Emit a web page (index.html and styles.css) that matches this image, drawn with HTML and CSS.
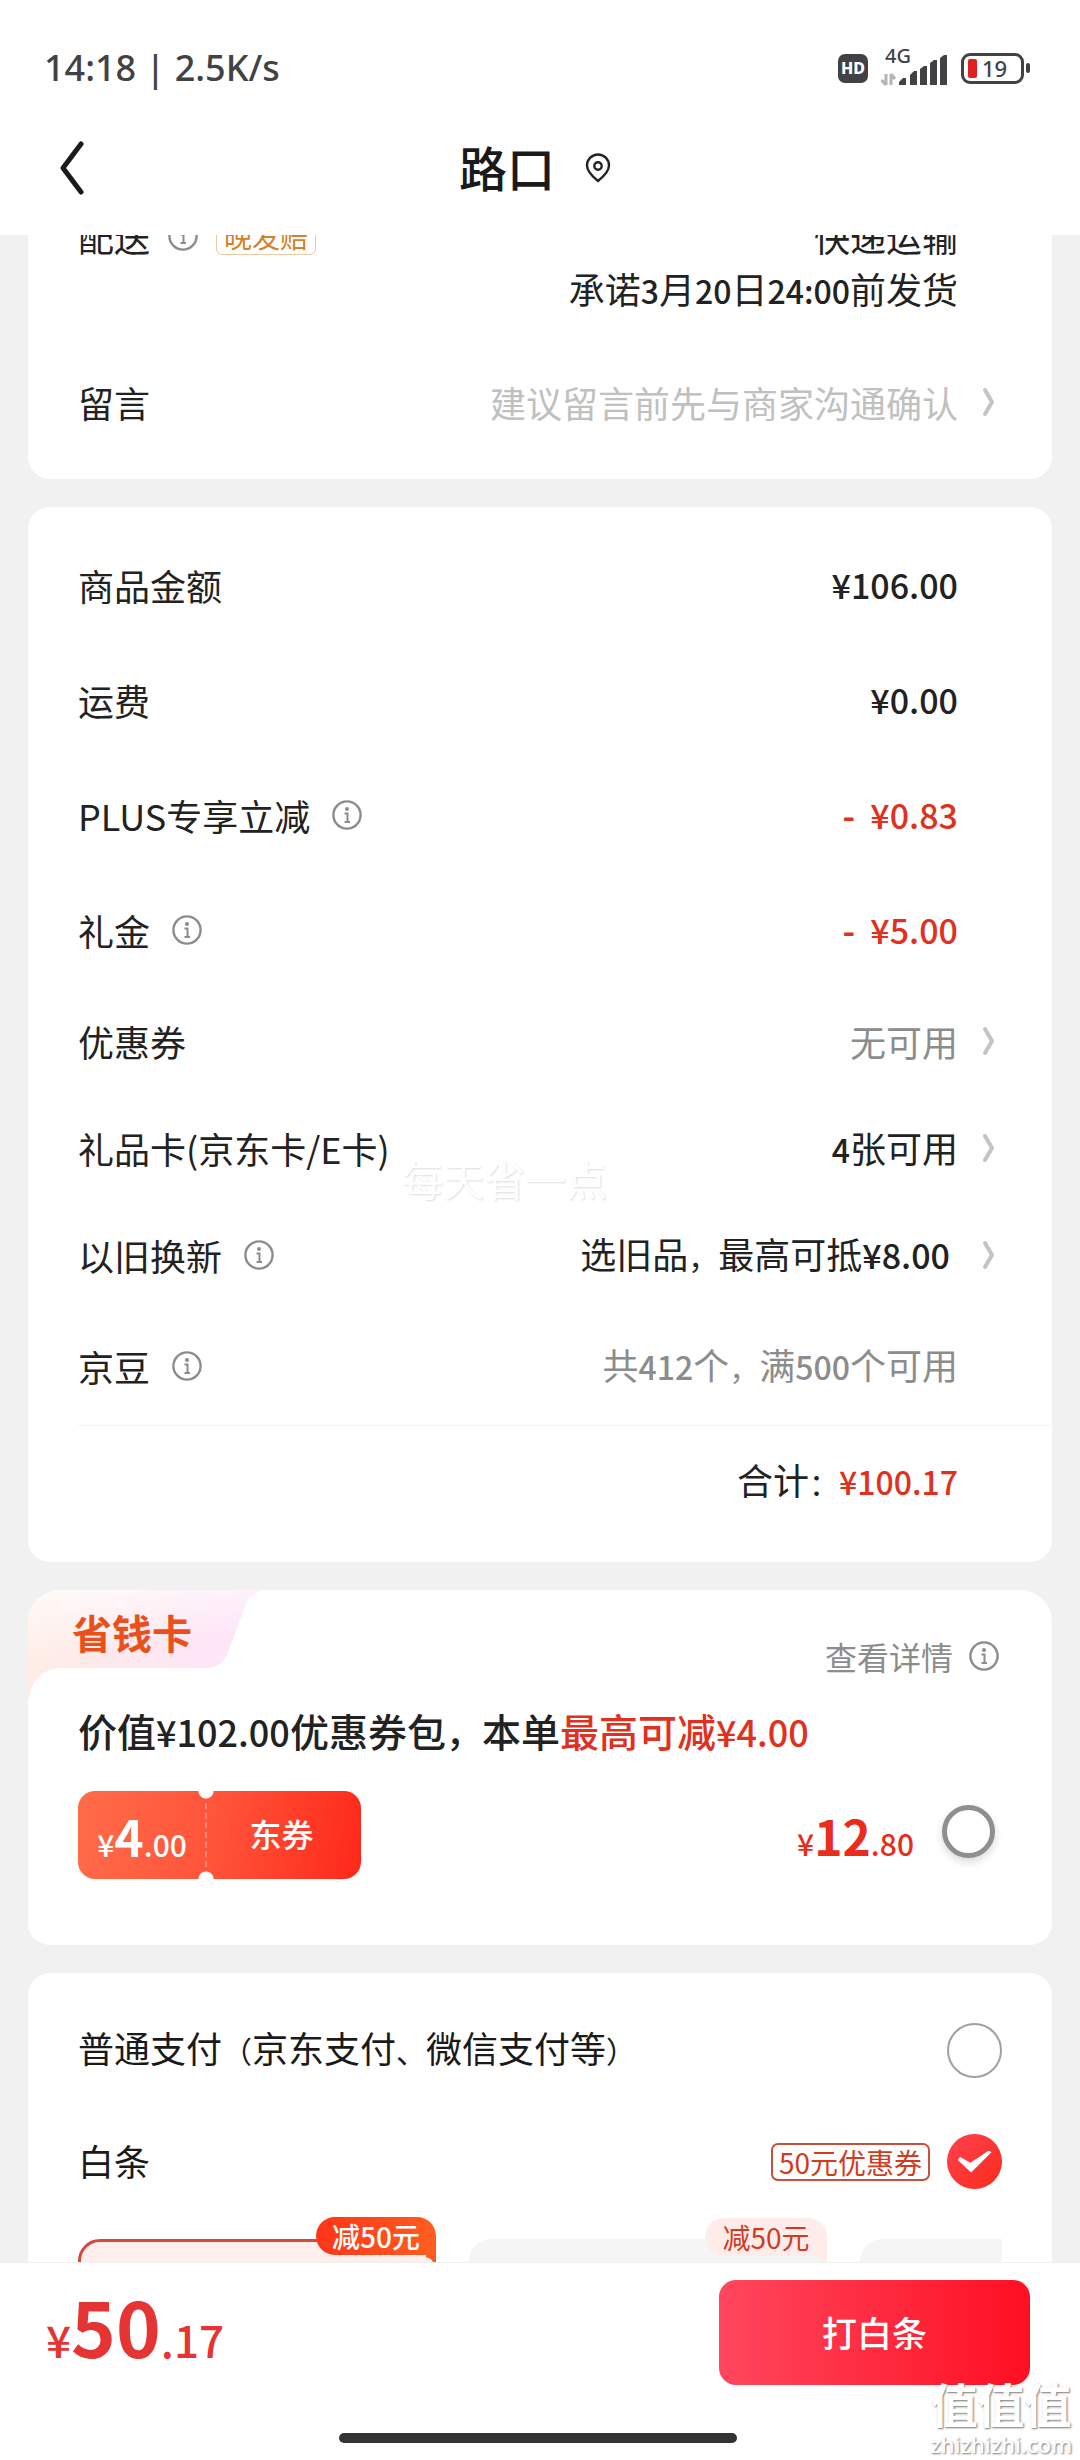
FILE: index.html
```html
<!DOCTYPE html>
<html lang="zh-CN">
<head>
    <meta charset="UTF-8">
    <meta name="viewport" content="width=device-width, initial-scale=1.0">
    <title>填写订单</title>
    <link rel="stylesheet" href="styles.css">
</head>
<body>
    <!-- Shared icons -->
    <svg class="icon-defs" aria-hidden="true">
        <symbol id="icon-info" viewBox="0 0 30 30">
            <circle cx="15" cy="15" r="13.6" fill="none" stroke="currentColor" stroke-width="2.4"/>
            <circle cx="15" cy="9" r="2" fill="currentColor"/>
            <path d="M12.5 13.5h3v8M12.5 22h5.5" fill="none" stroke="currentColor" stroke-width="2"/>
        </symbol>
        <symbol id="icon-arrow" viewBox="0 0 14 30">
            <path d="M3 3l7 12-7 12" fill="none" stroke="currentColor" stroke-width="4" stroke-linecap="round" stroke-linejoin="round"/>
        </symbol>
    </svg>

    <header class="top-bar">
        <div class="status-bar">
            <span class="status-time">14:18 | 2.5K/s</span>
            <div class="status-icons">
                <span class="hd">HD</span>
                <div class="signal">
                    <span class="network">4G</span>
                    <svg width="68" height="36" viewBox="0 0 68 36" aria-hidden="true">
                        <path d="M6 24v11M6 35l-4.500-5M11 35V24M11 24l4 5" fill="none" stroke="#b4b4b4" stroke-width="3"/>
                        <path d="M19 35v-3l4-4h3v7zM30 35V25l4-4h3v14zM40 35V19l4-3h3v19zM50 35V13l4-3h3v25zM60 35V8l4-3h3v30z" fill="#424244"/>
                    </svg>
                </div>
                <div class="battery"><span class="level"></span>19</div>
            </div>
        </div>
        <nav class="nav-bar">
            <button class="back-btn" aria-label="返回">
                <svg width="28" height="56" viewBox="0 0 28 56"><path d="M23 4L5 28l18 24" fill="none" stroke="#1a1a1a" stroke-width="5" stroke-linecap="round" stroke-linejoin="round"/></svg>
            </button>
            <h1>路口</h1>
            <svg class="pin" width="26" height="30" viewBox="0 0 26 30" aria-hidden="true">
                <path d="M13 28C8 24 2 19 2 12.500a11 11 0 0 1 22 0C24 19 18 24 13 28z" fill="none" stroke="#222" stroke-width="2.400" stroke-linejoin="round"/>
                <circle cx="13" cy="13" r="3.700" fill="none" stroke="#222" stroke-width="2.400"/>
            </svg>
        </nav>
    </header>

    <main class="content">
        <section class="card delivery-card">
            <div class="delivery">
                <div class="label">配送
                    <button class="info" aria-label="配送说明"><svg><use href="#icon-info"/></svg></button>
                    <span class="late-tag">晚发赔</span>
                </div>
                <div class="delivery-value">快递运输<br>承诺<span class="digits">3</span>月<span class="digits">20</span>日<span class="digits">24:00</span>前发货</div>
            </div>
            <div class="row">
                <label class="label" for="remark">留言</label>
                <input class="remark" id="remark" type="text" placeholder="建议留言前先与商家沟通确认">
                <svg class="arrow"><use href="#icon-arrow"/></svg>
            </div>
        </section>

        <section class="card">
            <div class="row tall">
                <span class="label">商品金额</span>
                <span class="value money">¥106.00</span>
            </div>
            <div class="row tall">
                <span class="label">运费</span>
                <span class="value money">¥0.00</span>
            </div>
            <div class="row tall">
                <div class="label">PLUS专享立减
                    <button class="info" aria-label="PLUS说明"><svg><use href="#icon-info"/></svg></button>
                </div>
                <span class="value money red"><b>-</b> &nbsp;¥0.83</span>
            </div>
            <div class="row tall">
                <div class="label">礼金
                    <button class="info" aria-label="礼金说明"><svg><use href="#icon-info"/></svg></button>
                </div>
                <span class="value money red"><b>-</b> &nbsp;¥5.00</span>
            </div>
            <div class="row">
                <span class="label">优惠券</span>
                <span class="value gray">无可用</span>
                <svg class="arrow"><use href="#icon-arrow"/></svg>
            </div>
            <div class="row">
                <span class="label">礼品卡(京东卡/E卡)</span>
                <span class="value"><span class="digits">4</span>张可用</span>
                <svg class="arrow"><use href="#icon-arrow"/></svg>
            </div>
            <div class="row">
                <div class="label">以旧换新
                    <button class="info" aria-label="以旧换新说明"><svg><use href="#icon-info"/></svg></button>
                </div>
                <span class="value trade-in">选旧品<span class="punct">，</span>最高可抵<span class="money">¥8.00</span></span>
                <svg class="arrow"><use href="#icon-arrow"/></svg>
            </div>
            <div class="row tall">
                <div class="label">京豆
                    <button class="info" aria-label="京豆说明"><svg><use href="#icon-info"/></svg></button>
                </div>
                <span class="value gray">共<span class="digits">412</span>个<span class="punct">，</span>满<span class="digits">500</span>个可用</span>
            </div>
            <div class="row tall total">
                <span class="value">合计<span class="punct">：</span><span class="digits red">¥100.17</span></span>
            </div>
        </section>

        <section class="card saving-card">
            <svg class="saving-tab" width="240" height="112" viewBox="0 0 240 112" aria-hidden="true">
                <defs>
                    <linearGradient id="tabFill" x1="0" y1="0" x2="1" y2="0">
                        <stop offset="0" stop-color="#ffece4"/>
                        <stop offset="0.6" stop-color="#fde7f3"/>
                        <stop offset="1" stop-color="#fde6fb"/>
                    </linearGradient>
                    <linearGradient id="tabFade" x1="0" y1="0" x2="0.3" y2="1">
                        <stop offset="0" stop-color="#fff" stop-opacity="0.8"/>
                        <stop offset="0.6" stop-color="#fff" stop-opacity="0"/>
                    </linearGradient>
                </defs>
                <path d="M0 0H236Q222 2 218 14L200 62Q194 78 178 78H32Q4 80 0 112z" fill="url(#tabFill)"/>
                <path d="M0 0H236Q222 2 218 14L200 62Q194 78 178 78H32Q4 80 0 112z" fill="url(#tabFade)"/>
            </svg>
            <div class="saving-head">
                <h2>省钱卡</h2>
                <a class="detail-link" href="#">查看详情 <svg><use href="#icon-info"/></svg></a>
            </div>
            <p class="saving-desc">价值<span class="amount">¥102.00</span>优惠券包<span class="amount">，</span>本单<span class="red">最高可减<span class="amount">¥4.00</span></span></p>
            <div class="saving-body">
                <div class="coupon">
                    <span class="coupon-price">¥<b>4</b>.00</span>
                    <span class="coupon-name">东券</span>
                </div>
                <label class="saving-price" for="savingCard">¥<b>12</b>.80</label>
                <input class="check" type="checkbox" id="savingCard">
            </div>
        </section>

        <section class="card pay-card">
            <div class="pay-row">
                <label for="payNormal">普通支付<span class="punct">（</span>京东支付<span class="punct">、</span>微信支付等<span class="punct">）</span></label>
                <input class="radio" type="radio" name="pay" id="payNormal">
            </div>
            <div class="pay-row">
                <label for="payBaitiao">白条</label>
                <span class="pay-tag">50元优惠券</span>
                <input class="radio" type="radio" name="pay" id="payBaitiao" checked>
            </div>
            <div class="plans">
                <div class="plan active"><span class="plan-badge">减50元</span></div>
                <div class="plan"><span class="plan-badge">减50元</span></div>
                <div class="plan"></div>
            </div>
        </section>
        <span class="slogan">每天省一点</span>
    </main>

    <footer class="bottom-bar">
        <div class="pay-line">
            <div class="final-price">¥<b>50</b>.17</div>
            <button class="pay-btn">打白条</button>
        </div>
        <div class="home-bar"></div>
        <div class="site-mark">值值值<small>zhizhizhi.com</small></div>
    </footer>
</body>
</html>
```
FILE: styles.css
```css
* {
    box-sizing: border-box;
}
body {
    margin: 0;
    height: 100vh;
    display: flex;
    flex-direction: column;
    background-color: #f1f1f1;
    color: #222;
    font-family: "Noto Sans CJK SC", "Noto Sans", sans-serif;
    font-size: 36px;
    line-height: 52px;
}
h1, h2, p {
    margin: 0;
}
button {
    padding: 0;
    border: none;
    background: none;
    font-family: inherit;
    cursor: pointer;
}
svg {
    display: block;
}
.icon-defs {
    position: absolute;
    width: 0;
    height: 0;
}

/* Header */
.top-bar {
    background-color: #fff;
}
.status-bar {
    display: flex;
    justify-content: space-between;
    align-items: center;
    padding: 42px 56px 7px 44px;
    color: #424244;
}
.status-time {
    font-family: "Noto Sans", sans-serif;
    font-weight: 500;
}
.status-icons {
    display: flex;
    align-items: center;
    font-family: "Noto Sans", sans-serif;
}
.hd {
    width: 30px;
    border-radius: 7px;
    background-color: #424244;
    color: #fff;
    font-size: 16px;
    font-weight: 800;
    line-height: 29px;
    text-align: center;
}
.signal {
    position: relative;
    margin: 0 13px 0 12px;
}
.network {
    position: absolute;
    top: -4px;
    left: 5px;
    font-size: 20px;
    font-weight: 500;
    line-height: 20px;
}
.battery {
    position: relative;
    display: flex;
    align-items: center;
    gap: 5px;
    width: 63px;
    height: 31px;
    padding-left: 4px;
    border: 3px solid #424244;
    border-radius: 9px;
    font-size: 22px;
    font-weight: 500;
    line-height: 24px;
}
.battery::after {
    content: "";
    position: absolute;
    right: -9px;
    width: 4px;
    height: 10px;
    border-radius: 2px;
    background-color: #424244;
}
.level {
    width: 9px;
    height: 19px;
    border-radius: 2px;
    background-color: #e02020;
}
.nav-bar {
    display: grid;
    grid-template-columns: 1fr auto 1fr;
    align-items: center;
    gap: 30px;
    height: 134px;
    padding: 0 124px 0 58px;
}
.nav-bar h1 {
    padding-bottom: 4px;
    color: #1a1a1a;
    font-size: 48px;
    font-weight: 500;
    line-height: 60px;
}
.back-btn {
    justify-self: start;
}

/* Cards */
.content {
    position: relative;
    flex: 1;
    min-height: 0;
    overflow: hidden;
    padding: 0 28px;
}
.card {
    margin-bottom: 28px;
    padding: 22px 0;
    border-radius: 22px;
    background-color: #fff;
}
/* the list is scrolled, its first card starts under the header */
.delivery-card {
    margin-top: -47px;
}
.delivery {
    display: flex;
    justify-content: space-between;
    align-items: flex-start;
    margin-bottom: 34px;
    padding: 0 94px 0 50px;
}
.delivery .label {
    gap: 18px;
}
.delivery-value {
    text-align: right;
}
.late-tag {
    padding: 0 7px;
    border: 1px solid #ecc9a2;
    border-radius: 6px;
    color: #d5812a;
    font-size: 28px;
    line-height: 36px;
}
.row {
    display: flex;
    align-items: center;
    height: 107px;
    padding: 0 94px 4px 50px;
}
.row.tall {
    height: 115px;
}
.label {
    display: flex;
    align-items: center;
    gap: 22px;
}
.value {
    margin-left: auto;
}
.info {
    color: #8c8c8c;
}
.info svg, .detail-link svg {
    width: 30px;
    height: 30px;
}
.arrow {
    width: 14px;
    height: 30px;
    margin: 0 -38px 0 24px;
    color: #c4c4c4;
}
.remark {
    flex: 1;
    min-width: 0;
    padding: 0;
    border: none;
    outline: none;
    background: none;
    font: inherit;
    text-align: right;
}
.remark::placeholder {
    color: #c0c0c0;
}
.money {
    font-size: 34px;
    font-weight: 500;
}
.digits {
    font-size: 32px;
    font-weight: 500;
}
.punct {
    font-size: 30px;
}
.gray {
    color: #8c8c8c;
}
.red {
    color: #e0301e;
}
.trade-in {
    padding-right: 8px;
}
.total {
    position: relative;
}
.total::before {
    content: "";
    position: absolute;
    top: 0;
    left: 50px;
    right: 0;
    height: 1px;
    background-color: #f3f3f3;
}

/* Saving card */
.saving-card {
    position: relative;
    overflow: hidden;
    padding: 16px 53px 66px 50px;
    border-radius: 32px 32px 22px 22px;
}
.saving-tab {
    position: absolute;
    top: 0;
    left: 0;
}
.saving-head {
    position: relative;
    display: flex;
    justify-content: space-between;
    align-items: flex-start;
}
.saving-head h2 {
    margin-left: -6px;
    color: #e9501b;
    font-size: 40px;
    font-weight: 700;
}
.detail-link {
    display: flex;
    align-items: center;
    gap: 16px;
    margin-top: 24px;
    color: #8c8c8c;
    font-size: 32px;
    text-decoration: none;
}
.saving-desc {
    margin: 22px 0 34px;
    font-size: 39px;
    font-weight: 500;
}
.amount {
    font-size: 36px;
}
.saving-body {
    display: flex;
    align-items: center;
}
.coupon {
    position: relative;
    display: grid;
    grid-template-columns: 128px 155px;
    align-items: center;
    height: 88px;
    border-radius: 17px;
    background-image: linear-gradient(100deg, #ff6c49, #ff5339 50%, #ff2819);
    color: #fff;
    text-align: center;
}
/* ticket notches and perforation */
.coupon::before {
    content: "";
    position: absolute;
    inset: 0;
    background: radial-gradient(circle at 128px 0, #fff 7px, transparent 8px), radial-gradient(circle at 128px 100%, #fff 7px, transparent 8px);
}
.coupon::after {
    content: "";
    position: absolute;
    top: 12px;
    bottom: 12px;
    left: 127px;
    border-left: 2px dashed rgba(255, 255, 255, 0.3);
}
.coupon-price {
    padding-top: 8px;
    font-size: 30px;
    font-weight: 500;
}
.coupon-price b {
    font-size: 50px;
}
.coupon-name {
    padding: 0 4px 4px 0;
    font-size: 32px;
    font-weight: 500;
}
.saving-price {
    margin-left: auto;
    padding-top: 8px;
    color: #e92c1c;
    font-size: 30px;
    font-weight: 500;
}
.saving-price b {
    font-size: 48px;
}
.check {
    appearance: none;
    width: 53px;
    height: 53px;
    margin: 0 4px 8px 28px;
    border: 5px solid #8f8f8f;
    border-radius: 50%;
    background-color: #fff;
    box-shadow: 0 4px 8px rgba(0, 0, 0, 0.15);
}

/* Payment methods */
.pay-card {
    padding: 22px 50px;
    color: #1a1a1a;
}
.pay-row {
    display: flex;
    align-items: center;
    gap: 17px;
    height: 111px;
}
.pay-row label {
    margin-right: auto;
    padding-bottom: 4px;
}
.pay-tag {
    padding: 0 6px;
    border: 2px solid #c8503c;
    border-radius: 7px;
    color: #cf3c22;
    font-size: 28px;
    line-height: 34px;
}
.radio {
    appearance: none;
    display: grid;
    place-items: center;
    width: 55px;
    height: 55px;
    margin: 0;
    border: 2px solid #a0a0a0;
    border-radius: 50%;
}
.radio:checked {
    border: none;
    background-image: linear-gradient(135deg, #ff4150, #fa2c19);
}
.radio:checked::after {
    content: "";
    width: 34px;
    height: 22px;
    background-color: #fff;
    clip-path: polygon(0 42%, 8% 30%, 38% 56%, 92% 0, 100% 8%, 40% 100%);
}
.plans {
    display: flex;
    gap: 33px;
    overflow: hidden;
}
.plan {
    position: relative;
    flex: 0 0 358px;
    height: 160px;
    margin-top: 22px;
    border-radius: 22px;
    background-color: #f5f5f5;
}
.plan.active {
    border: 3px solid #d44a3c;
    background-color: #ffeeeb;
}
.plan-badge {
    position: absolute;
    top: -21px;
    right: 0;
    width: 122px;
    border-radius: 20px 20px 0 20px;
    background-color: #ffecea;
    color: #cf3c22;
    font-size: 28px;
    line-height: 38px;
    text-align: center;
}
/* small tail that runs down the plan's right edge */
.plan-badge::after {
    content: "";
    position: absolute;
    top: 100%;
    right: 0;
    width: 10px;
    height: 10px;
    background-image: radial-gradient(circle at 0 100%, transparent 7px, #ffecea 8px);
}
.plan.active .plan-badge {
    top: -25px;
    right: -3px;
    width: 120px;
    background-image: linear-gradient(100deg, #ff3418, #ff5f20);
    color: #fff;
    font-weight: 500;
}
.plan.active .plan-badge::after {
    background-image: radial-gradient(circle at 0 100%, transparent 7px, #fb5a20 8px);
}
.slogan {
    position: absolute;
    top: 917px;
    left: 402px;
    color: #fff;
    font-size: 41px;
    text-shadow: 1px 1px 2px #ddd;
}

/* Bottom bar */
.bottom-bar {
    position: relative;
    padding: 16px 50px 17px 46px;
    border-top: 1px solid #f0f0f0;
    background-color: #fff;
}
.pay-line {
    display: flex;
    justify-content: space-between;
    align-items: center;
    height: 106px;
}
.final-price {
    color: #e53434;
    font-size: 44px;
    font-weight: 500;
    line-height: 106px;
}
.final-price b {
    font-size: 76px;
    font-weight: 700;
}
.pay-btn {
    width: 311px;
    height: 105px;
    padding-bottom: 2px;
    border-radius: 17px;
    background-image: linear-gradient(90deg, #ff475e, #ff0f22);
    color: #fff;
    font-size: 35px;
    font-weight: 500;
}
.home-bar {
    width: 398px;
    height: 10px;
    margin: 48px auto 0;
    border-radius: 5px;
    background-color: #333;
}
.site-mark {
    position: absolute;
    right: 8px;
    bottom: 2px;
    color: #fff;
    font-size: 47px;
    font-weight: 700;
    line-height: 54px;
    text-align: center;
    text-shadow: 1px 1px 2px #777;
}
.site-mark small {
    display: block;
    font-family: "Noto Sans", sans-serif;
    font-size: 22px;
    font-weight: 500;
    line-height: 28px;
}
```
